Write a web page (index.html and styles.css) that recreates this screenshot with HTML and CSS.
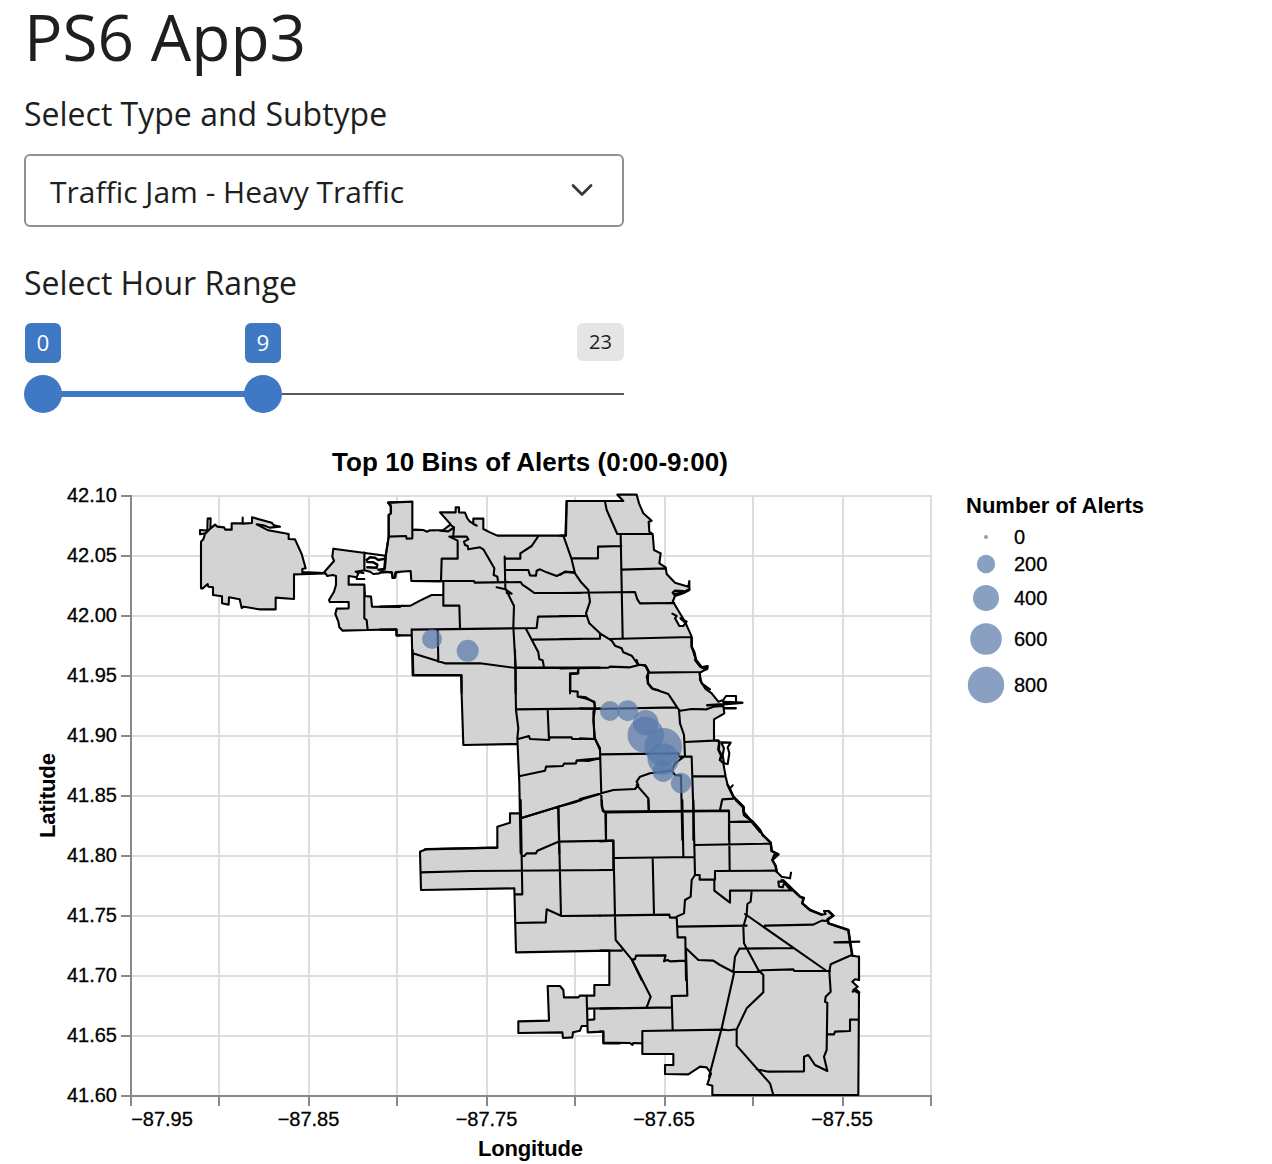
FILE: index.html
```html
<!DOCTYPE html>
<html lang="en">
<head>
<meta charset="utf-8">
<title>PS6 App3</title>
<link rel="stylesheet" href="styles.css">
</head>
<body>
<main class="page">
  <h1 class="title">PS6 App3</h1>
  <section class="controls">
    <label class="label">Select Type and Subtype</label>
    <div class="select"><span>Traffic Jam - Heavy Traffic</span>
      <svg class="chevron" viewBox="0 0 24 16"><path d="M3 3.5 L12 12.5 L21 3.5"/></svg>
    </div>
    <label class="label label-range">Select Hour Range</label>
    <div class="slider">
      <div class="tags"><span class="tag">0</span><span class="tag tag-to">9</span><span class="tag tag-max">23</span></div>
      <svg class="track" viewBox="0 0 600 40"><path class="rail" d="M19 20H600"/><path class="bar" d="M19 20H239"/><circle cx="19" cy="20" r="19"/><circle cx="239" cy="20" r="19"/></svg>
    </div>
  </section>
  <svg class="chart" viewBox="0 430 1272 734">
    <path class="grid" d="M219 496V1096M309 496V1096M397 496V1096M487 496V1096M575 496V1096M665 496V1096M753 496V1096M843 496V1096M931 495V1096M131 496H932M131 556H931M131 616H931M131 676H931M131 736H931M131 796H931M131 856H931M131 916H931M131 976H931M131 1036H931"/>
    <path class="axis" d="M131 495V1106M121 1096H932M121 496H131M121 556H131M121 616H131M121 676H131M121 736H131M121 796H131M121 856H131M121 916H131M121 976H131M121 1036H131M219 1096V1106M309 1096V1106M397 1096V1106M487 1096V1106M575 1096V1106M665 1096V1106M753 1096V1106M843 1096V1106M931 1096V1106"/>

    <g class="land">
      <path transform="translate(190 490) scale(.33333)" d="M33 295V155L45 128 62 115 75 105 82 110 102 112 106 119H125V100H186V82L245 98 252 103 270 110 258 115 240 106H205L235 121 296 132V147L315 148 347 235 337 237V249L312 253V327L257 323V358H207L162 350 155 354 149 328 117 322 116 344 96 340V319L69 315V292L55 290 53 282ZM403 246 432 213 427 200 430 176 587 197 596 140V75L602 70V45L594 38 640 36V248H616L614 262H606V248L575 245 525 241 497 245 500 262 476 258V284H523L525 318 543 320 546 350H640V436H619V418L458 422 448 412 445 395 436 372 440 356 476 355V336L417 330 432 305 438 285V258H412Z"/>
      <path class="water" transform="translate(190 490) scale(.33333)" d="M528 193 585 200 582 238 565 240 562 228 540 234 528 230Z"/>
      <path transform="translate(380 490) scale(.33333)" d="M24 38 97 34V120H130L140 125 165 120H190L212 103 180 67H227V52H237V67L255 68 270 95 290 107 280 102V86H310V115L352 137H556L560 33H610V610H245V556H98L97 436H50V419H0V350H92L155 315H190V275L94 273 92 242 48 248 46 264H38L35 248H15V235L17 200 26 140V75L33 70V50Z"/>
      <path transform="translate(560 490) scale(.33333)" d="M0 137H18L20 33H190L172 14H230L237 40 250 70 275 92 268 125 278 132 282 180 302 190 300 225 317 232 325 260 345 278 385 290 390 300 343 320 345 345 375 395 395 440V470L410 510 425 532 443 533 428 543 418 550 425 580 450 598V610H0Z"/>
      <path class="water" transform="translate(560 490) scale(.33333)" d="M352 385 368 386 374 400 362 408ZM345 309 368 304V308L345 314Z"/>
      <path transform="translate(400 650) scale(.33333)" d="M38 0 40 75H183L190 285 352 282 360 490H330V518L292 530V610H610V0Z"/>
      <path transform="translate(580 660) scale(.33333)" d="M0 0H345L360 20H380L362 38 360 60 375 85 395 100 415 125 433 135V160L402 178V240L415 245 428 250 430 310 437 350 445 375 460 410 490 440 495 460 540 510V540H0Z"/>
      <path transform="translate(400 800) scale(.33333)" d="M360 0V40H332V70L292 80V145L80 147 60 155 63 272 343 265 348 457 628 452V555H583V587L492 592 490 570 480 558H443L447 662 355 664V699L487 697 489 714 517 712 519 697 540 692 545 678H560L563 697H610V730H670V0ZM568 628V659H583V628Z"/>
      <path transform="translate(600 800) scale(.33333)" d="M0 0H408L430 25 432 45 480 90 512 128 515 150 535 163 517 175 522 195 530 215 600 290 612 315 660 342 680 333 700 347 685 370 745 390 757 467 777 470V540H28V452H0Z"/>
      <path transform="translate(600 930) scale(.33333)" d="M0 0V63H28V165H0V305H10V338L127 340V372H220V405H195V432L265 433 300 410 325 412 333 430 322 463 337 467V495H775L777 190 760 180 770 165 757 155 777 145V80L755 75 745 0Z"/>
    </g>

    <g class="borders">
      <!-- O'Hare and the far northwest -->
      <path transform="translate(190 490) scale(.33333)" d="M38 295 53 282 55 290 69 292V315L96 319V340L116 344 117 322 149 328 155 354 162 350 207 358H257V323L312 327V253L403 250H337V237L347 235 335 192 315 148 296 147V132L235 121 200 103 220 106 240 113 270 110 252 106 245 98 186 82V99L158 101V83 100H125V119H106L102 112 82 110 75 104 62 115 45 132 40 148 33 155V295ZM30 120 52 122 53 86 62 85 61 115M30 120V133L45 130M337 246 403 249M403 246 432 213 427 200 430 176 587 197 596 140V75L602 70V45L594 38 630 36M523 188V241L497 245 505 250 500 262 476 258V284H523L525 318 543 320 546 350 630 351M500 267H523M497 245 520 249M523 284V385L530 390 533 420M523 241 540 245 550 252 568 250 576 243 606 248 608 264H614L616 248 630 246M403 246 412 258 428 255 438 258V285L432 305 417 330 420 336H476V355L440 356 436 372 445 395 448 412 458 422 530 420 619 418V436H630"/>
      <path class="lagoon" transform="translate(190 490) scale(.33333)" d="M530 210 540 202 555 203 565 210 580 207M532 216 550 217 562 224 560 233 532 232M587 197 583 237 565 239"/>
      <!-- North side, inland -->
      <path transform="translate(380 490) scale(.33333)" d="M26 140V75L33 70V50L24 38 97 35V120L106 119 130 120 140 125 150 121 190 120 212 103 180 67 227 67V52H237V67L255 68 262 85 270 95 290 107 280 102V86H310V117L330 127 352 137H556L560 33H600M17 200 26 140 78 138 80 146 97 145V120M17 200 15 235M0 248 35 246 38 264 46 262 48 246 92 243 94 273 183 274 185 206H233V152L208 140H260L265 148 252 155 255 165 263 168 265 178 300 172 310 178 343 235 341 255 352 260 354 275M220 135 222 112 212 105M222 112 205 124 180 122M94 273 282 273 284 278 422 276 427 284 445 296 463 309 600 309M190 275V347H238L240 415M190 315 155 315 120 332 92 347 0 350M0 419H50V436H95M95 418 98 556H245V610M97 419 470 414 474 380 600 378M374 200 376 295 402 348 400 410 407 534V610M374 206H421V190L455 168 474 140M376 240H445L450 256 468 257 470 242 480 238 500 247 530 258 555 246 583 248M350 292 376 298 395 311 380 309M437 415 475 487 478 508 488 511 492 532M455 449 600 447M173 420 175 515M98 490 195 520H300L407 534 600 534M570 610V550H593L595 536"/>
      <!-- North lakefront -->
      <path transform="translate(560 490) scale(.33333)" d="M0 137H18L20 33H190L172 14H230L237 40 250 70 275 92 266 95 268 125 278 132 282 180 302 190 298 220 317 232 320 252 345 278 385 290 388 273V300L370 310 345 318 338 308 345 302 370 303M345 318 338 335 345 345 375 395M337 371 350 378 345 385 358 408 370 408 380 395 365 387M375 395 395 440V470L408 510 425 532 443 528 442 537 428 543 418 550 425 580 450 598M135 35 140 60 172 132H278M34 205H114V170L184 168M182 135 188 443M187 239 317 235M10 137 34 205 45 250 62 275 85 300 90 335 78 370 88 400 120 430 155 452 165 467 185 475 190 487 215 497 235 525M0 255 15 245 42 247M0 309 225 306 232 328 240 340 343 339M0 378H78M0 447 120 446V430M150 447 395 441M0 535 145 533 150 530 210 532 240 524 258 528 267 545 260 560 265 580 280 598 295 600M267 548 425 546"/>
      <path class="shore" transform="translate(560 490) scale(.33333)" d="M395 445V470L403 487 408 510 425 532 441 531M345 312 368 308 388 298M362 385 376 398"/>
      <!-- West side -->
      <path transform="translate(400 650) scale(.33333)" d="M38 0 40 75H183L190 285 352 282M345 0 348 180 355 235 352 265 358 400 362 610M350 178 600 175M443 178 447 270M352 268 387 258 390 267 447 270 450 262H515L517 267H585L600 295M583 267 580 185 585 175 583 155 555 145 533 140V125L511 123V72L535 70V55M357 379 435 362 438 350 488 348 492 341 528 340 530 331 565 333 600 325M362 505 475 470 522 455 600 432M475 470 478 610M345 53H600M358 490H330V518L292 530V593L75 598"/>
      <!-- Downtown and harbour -->
      <path transform="translate(580 660) scale(.33333)" d="M345 0 360 20 375 27 382 20M360 38V60L375 85 395 100 415 125M170 0 175 15 195 15 205 35 203 70 215 85 265 102 280 125 297 150 300 190 312 225 315 290M0 145 45 147 290 142 300 152 335 147 380 148 400 140 430 138 433 160 402 178V240L418 245M0 110 18 112 43 128 45 145 40 180 45 235 60 270 65 440 72 455M0 235 45 237M315 246 415 241M60 283 295 280 297 290H335L340 450V540M0 300 60 295M0 417 100 390 165 387 175 375 170 365 180 350 210 340 275 332 285 310 312 290M170 375 205 415 207 452M275 332 285 345 303 347 307 540M340 349H437M72 455 447 452V540M76 455 78 540M447 486 515 485M420 450 427 418 460 416M418 245 415 270 425 290 420 300 430 310M425 250 432 265 428 285 432 310M425 247 452 248 443 262 448 280 443 312 430 310 437 350 443 375 450 385 458 376 450 385 460 410 490 440 492 458 515 485 540 515M415 125 430 120 438 108H468V125"/>
      <path class="shore" transform="translate(580 660) scale(.33333)" d="M382 136 430 133 487 128 430 126M433 145H467M418 245 416 270 424 285 420 300M443 375 460 410 490 440 492 458 515 485 540 515"/>
      <!-- Southwest -->
      <path transform="translate(400 800) scale(.33333)" d="M362 0 367 283H343M362 55 475 20 520 8 545 0M292 143 80 147 60 155 63 270 343 265 348 457 628 452V555H583V587H540L535 592H492L490 570 480 558H443L447 662 355 664V699L487 697 489 714 517 712 519 697 540 692 545 678 560 678M475 20 483 347 440 328 437 367 345 369M365 168 373 168 380 160 408 160 412 152 475 125 640 122V210M63 217 215 213 640 210M483 348 600 347M560 587 563 697 610 695V730H660M563 626 660 624M583 626V658L563 660M540 587H583"/>
      <!-- South side -->
      <path transform="translate(600 800) scale(.33333)" d="M5 0 8 33 20 37 387 33 389 212M18 37V122M0 124 40 122 45 350 47 420 95 478 125 540M45 174 283 171M158 174 162 344M280 0 285 225H299V239H345V213L525 212M285 225 275 240 272 290 255 300 252 340 230 350 233 412H256L258 540M247 0 250 170M145 0 146 33M389 66 452 65M285 135 512 131M0 210H42M0 347 208 344 210 353H230M343 240V272L390 308V272L575 271M455 273 452 305 442 312 440 345 430 380 432 430 475 510M233 380 440 377M435 342 680 513M495 377 640 374 665 362 685 363M418 446 580 444M0 452H65M95 478 105 478 108 467 197 466 192 484 203 480 210 484 256 482M258 445 295 480 340 482 360 495 400 516 480 516 485 511 580 508 583 513 690 513M400 516 405 470 418 446M408 0 430 22 432 45 458 65 480 90 488 105 512 128 515 153 535 163 522 165 517 180 527 198 530 215 545 230 570 235 573 218M570 269 550 245 535 245 537 260 548 262 553 248M545 240 600 290 612 293 607 310 630 330 665 344 677 342 672 333 685 333 700 347 683 358 685 370 745 390 752 440 757 467 777 470V540M703 427 778 425"/>
      <path class="shore" transform="translate(600 800) scale(.33333)" d="M408 0 430 22 432 45 458 65 480 90 488 105 512 128 515 153 535 163 517 180 527 198 530 215M550 241 600 290 610 295 607 310 630 330 665 344M685 333 700 347 683 358 685 370 745 390 757 467"/>
      <!-- Far south -->
      <path transform="translate(600 930) scale(.33333)" d="M95 88 152 200 140 232M0 236 215 232M258 60 262 197 215 198 218 300M10 338 90 339 97 345 100 339 127 340M127 303 370 299 385 301 410 298M403 125 365 295 327 440M475 120 490 135V187L440 235 410 298V347L510 460 520 495M470 418 505 425 612 424V380L625 375 645 405 682 423 672 380 680 360 682 218 675 215 677 200 692 185 688 125 692 103 755 75M682 313 702 313 705 305 750 303V269L775 268M127 303V372H220V405H195V432L265 433 300 410 320 412 333 430 322 463 337 467V495H775L777 190 760 180 773 170 757 155 765 148 777 150V80M758 185 770 180 778 187M0 305H10V338"/>
    </g>

    <g class="bubble">
      <circle cx="432" cy="639" r="10"/><circle cx="467.7" cy="650.8" r="11"/><circle cx="610" cy="711" r="10"/><circle cx="627.7" cy="710.7" r="10.5"/>
      <circle cx="645.7" cy="722.7" r="12.8"/><circle cx="645.7" cy="735" r="18.2"/><circle cx="663.2" cy="746.8" r="18.9"/><circle cx="663.3" cy="759" r="15.8"/><circle cx="663.2" cy="771.2" r="10.7"/><circle cx="681" cy="783" r="10.3"/>
      <circle cx="986" cy="537" r="2"/><circle cx="986" cy="564" r="9.2"/><circle cx="986" cy="598" r="13"/><circle cx="986" cy="639" r="15.8"/><circle cx="986" cy="685" r="18.2"/>
    </g>

    <g class="tick end"><text x="117" y="502">42.10</text><text x="117" y="562">42.05</text><text x="117" y="622">42.00</text><text x="117" y="682">41.95</text><text x="117" y="742">41.90</text><text x="117" y="802">41.85</text><text x="117" y="862">41.80</text><text x="117" y="922">41.75</text><text x="117" y="982">41.70</text><text x="117" y="1042">41.65</text><text x="117" y="1102">41.60</text></g>
    <g class="tick mid"><text x="162" y="1126">−87.95</text><text x="308.5" y="1126">−87.85</text><text x="486.5" y="1126">−87.75</text><text x="664" y="1126">−87.65</text><text x="842" y="1126">−87.55</text></g>
    <text class="heading" x="332" y="471" textLength="396">Top 10 Bins of Alerts (0:00-9:00)</text>
    <text class="name" x="478" y="1156" textLength="105">Longitude</text>
    <text class="name" transform="translate(55 838) rotate(-90)" textLength="85">Latitude</text>
    <text class="name" x="966" y="513" textLength="178">Number of Alerts</text>
    <g class="tick"><text x="1014" y="543.5">0</text><text x="1014" y="570.5">200</text><text x="1014" y="604.5">400</text><text x="1014" y="645.5">600</text><text x="1014" y="691.5">800</text></g>
  </svg>
</main>
</body>
</html>
```
FILE: styles.css
```css
* { box-sizing: border-box; }
body { margin: 0; background: #fff; color: #1d1f21; font-family: "Open Sans", "Noto Sans", sans-serif; }
.page { display: flex; flex-direction: column; width: 1272px; height: 1164px; }
.title { margin: 0; padding-left: 24px; height: 91px; font-size: 64px; line-height: 73px; font-weight: 400; }
.controls { display: flex; flex-direction: column; height: 339px; padding-left: 24px; width: 624px; }
.label { height: 63px; font-size: 32px; line-height: 45px; white-space: nowrap; }
.label-range { height: 63px; margin-top: 33px; }
.select { display: flex; align-items: center; justify-content: space-between; height: 73px; padding: 2px 28px 0 24px; border: 2px solid #8d919b; border-radius: 6px; font-size: 30px; white-space: nowrap; }
.chevron { width: 24px; height: 16px; margin-top: -3px; fill: none; stroke: #343a40; stroke-width: 2.8; stroke-linecap: round; stroke-linejoin: round; }
.slider { display: flex; flex-direction: column; gap: 12px; }
.tags { display: flex; align-items: flex-start; height: 40px; padding-left: 1px; }
.tag { width: 36px; height: 40px; border-radius: 6px; background: #3f79c3; color: #fff; font-size: 22.4px; line-height: 39px; text-align: center; }
.tag-to { margin-left: 184px; }
.tag-max { width: 47px; height: 38px; margin-left: auto; background: #e5e5e5; color: #1d1f21; font-size: 20px; line-height: 37px; }
.track { width: 600px; height: 40px; margin-top: -1px; fill: #3f79c3; }
.rail { stroke: #595959; stroke-width: 2; }
.bar { stroke: #3f79c3; stroke-width: 6; }
.chart { display: block; flex: none; width: 1272px; height: 734px; font-family: "Liberation Sans", Arial, sans-serif; fill: #000; }
.grid { stroke: #ddd; stroke-width: 2; fill: none; }
.axis { stroke: #888; stroke-width: 2; fill: none; }
.land { fill: #d3d3d3; fill-rule: evenodd; }
.water { fill: #fff; }
.borders { fill: none; stroke: #000; stroke-width: 6.3; stroke-linejoin: round; stroke-linecap: round; }
.shore, .lagoon { stroke-width: 7.5; }
.bubble { fill: #5777a9; }
.bubble circle { opacity: .7; }
.tick { font-size: 20px; stroke: #000; stroke-width: .3; }
.end { text-anchor: end; }
.mid { text-anchor: middle; }
.heading { font-size: 26px; font-weight: 700; }
.name { font-size: 22px; font-weight: 700; }
```
